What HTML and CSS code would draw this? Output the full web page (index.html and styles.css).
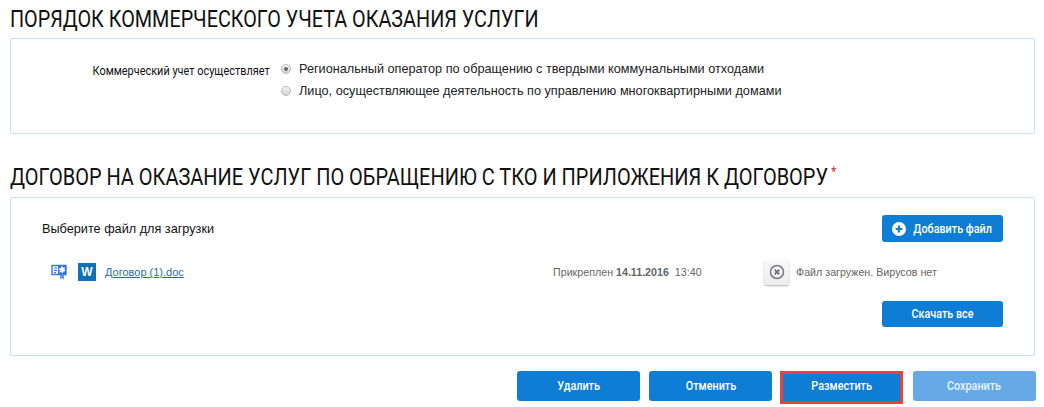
FILE: index.html
```html
<!DOCTYPE html>
<html>
    <head>
        <title>Договор</title>
        <link rel="stylesheet" href="styles.css">
    </head>
    <body>
        <h2 class="title">ПОРЯДОК КОММЕРЧЕСКОГО УЧЕТА ОКАЗАНИЯ УСЛУГИ</h2>
        <div class="panel panel-account">
            <div class="field-label"><span class="narrow narrow-right">Коммерческий учет осуществляет</span></div>
            <div class="radios">
                <div class="radio-row"><span class="radio checked"></span>Региональный оператор по обращению с твердыми коммунальными отходами</div>
                <div class="radio-row"><span class="radio"></span>Лицо, осуществляющее деятельность по управлению многоквартирными домами</div>
            </div>
        </div>

        <h2 class="title title-second">ДОГОВОР НА ОКАЗАНИЕ УСЛУГ ПО ОБРАЩЕНИЮ С ТКО И ПРИЛОЖЕНИЯ К ДОГОВОРУ<span class="req">*</span></h2>
        <div class="panel panel-files">
            <div class="files-head">
                <span class="choose">Выберите файл для загрузки</span>
                <a class="btn btn-add">
                    <svg class="plus" width="14" height="14" viewBox="0 0 14 14"><circle cx="7" cy="7" r="7" fill="#fff"/><path d="M7 3.600v6.800M3.600 7h6.800" stroke="#0e7dd6" stroke-width="2.200"/></svg>
                    <span class="narrow">Добавить файл</span>
                </a>
            </div>
            <div class="file-row">
                <svg class="cert" width="16" height="16" viewBox="0 0 16 16">
                    <path d="M1 1.500h14v9H1z" fill="#fff" stroke="#3b78e0" stroke-width="1.400"/>
                    <path d="M3 4h3M3 6.300h3M3 8.600h2" stroke="#3b78e0" stroke-width="1.200"/>
                    <path d="M7 1.500h8v9H7z" fill="#2f74e2"/>
                    <path d="M11 1.800l1 2 2.200-.4-.8 2.200 1.200 1.500-2.200.3-.8 2.200-1.200-1.700-2.200.5.600-2.200-1.500-1.500 2.300-.4z" fill="#fff"/>
                    <path d="M9 10.500v5l2-1.500 2 1.500v-5z" fill="#5a9bea"/>
                </svg>
                <span class="word">W</span>
                <a class="file-link">Договор (1).doc</a>
                <span class="attached">Прикреплен <b>14.11.2016</b>&nbsp; 13:40</span>
                <span class="remove">
                    <svg width="16" height="16" viewBox="0 0 16 16"><circle cx="8" cy="8" r="6.500" fill="none" stroke="#77787c" stroke-width="1.500"/><path d="M5.800 5.800l4.400 4.400M10.200 5.800l-4.400 4.400" stroke="#77787c" stroke-width="2"/></svg>
                </span>
                <span class="virus">Файл загружен. Вирусов нет</span>
            </div>
            <div class="files-foot">
                <a class="btn btn-all"><span class="narrow">Скачать все</span></a>
            </div>
        </div>

        <div class="actions">
            <a class="btn btn-action"><span class="narrow">Удалить</span></a>
            <a class="btn btn-action"><span class="narrow">Отменить</span></a>
            <a class="btn btn-action btn-marked"><span class="narrow">Разместить</span></a>
            <a class="btn btn-action btn-off"><span class="narrow">Сохранить</span></a>
        </div>
    </body>
</html>
```

FILE: styles.css
```css
* {
    box-sizing: border-box;
}
body {
    margin: 0;
    padding: 0 9px 0 10px;
    font-family: "Liberation Sans", Arial, sans-serif;
    font-size: 12px;
    color: #111;
    background: #fff;
    overflow: hidden;
}
.title {
    margin: 0;
    height: 38px;
    padding-top: 6px;
    font-family: Roboto, sans-serif;
    font-size: 24px;
    line-height: 26px;
    font-weight: normal;
    color: #111;
    white-space: nowrap;
    transform: scaleX(0.825);
    transform-origin: left center;
}
.title-second {
    margin-top: 25px;
    padding-top: 0;
    transform: scaleX(0.832);
}
.req {
    color: #c8313e;
    font-size: 14px;
    vertical-align: 8px;
    margin-left: 4px;
}
/* no condensed face installed, so squeeze the text a bit */
.narrow {
    display: inline-block;
    transform: scaleX(0.9);
    white-space: nowrap;
}
.narrow-right {
    transform: scaleX(0.91);
    transform-origin: right center;
}
.panel {
    border: 1px solid #c6e0f5;
    border-radius: 2px;
}
.panel-account {
    height: 96px;
    display: flex;
    padding-top: 19px;
}
.field-label {
    width: 259px;
    text-align: right;
    padding-top: 5px;
    font-family: Roboto, sans-serif;
    font-size: 12px;
    line-height: 16px;
}
.radios {
    margin-left: 11px;
}
.radio-row {
    display: flex;
    align-items: center;
    height: 22px;
    font-size: 12.700px;
    color: #222;
}
.radio {
    width: 10px;
    height: 10px;
    border-radius: 50%;
    border: 1px solid #bbb;
    background: linear-gradient(#f2f2f2, #d4d4d4);
    margin-right: 8px;
    position: relative;
}
.radio.checked::after {
    content: "";
    position: absolute;
    left: 2px;
    top: 2px;
    width: 4px;
    height: 4px;
    border-radius: 50%;
    background: #666;
}
.panel-files {
    height: 159px;
    padding: 17px 31px 0 31px;
}
.files-head {
    display: flex;
    justify-content: space-between;
    align-items: center;
    font-size: 12.700px;
}
.btn {
    display: flex;
    align-items: center;
    justify-content: center;
    background: #0e7dd6;
    color: #fff;
    border-radius: 3px;
    font-family: Roboto, sans-serif;
    font-size: 12px;
    font-weight: 500;
}
.btn-add {
    width: 121px;
    height: 27px;
    padding-left: 3px;
}
.plus {
    margin-right: 3.500px;
}
.file-row {
    display: flex;
    align-items: center;
    height: 26px;
    margin-top: 17px;
    padding-left: 9px;
    font-size: 10.700px;
    color: #666;
}
.word {
    width: 18px;
    height: 18px;
    margin-left: 11px;
    background: #0e72b8;
    color: #fff;
    font-weight: bold;
    font-size: 12px;
    line-height: 18px;
    text-align: center;
}
.file-link {
    width: 448px;
    margin-left: 9px;
    color: #2c6ba8;
    text-decoration: underline;
    font-size: 11px;
}
.attached {
    width: 211px;
}
.remove {
    display: flex;
    align-items: center;
    justify-content: center;
    width: 25px;
    height: 25px;
    border-radius: 2px;
    background: linear-gradient(#fafafa, #ebebeb);
    box-shadow: 0 1px 2px rgba(0, 0, 0, 0.3);
}
.virus {
    margin-left: 7px;
}
.files-foot {
    display: flex;
    justify-content: flex-end;
    margin-top: 16px;
}
.btn-all {
    width: 121px;
    height: 26px;
}
.actions {
    display: flex;
    align-items: flex-start;
    justify-content: flex-end;
    gap: 9px;
    margin-top: 15px;
    margin-right: -1px;
}
.btn-action {
    width: 123px;
    height: 30px;
}
.btn-marked {
    height: 33px;
    margin: 0 1px 0 -1px;
    padding-bottom: 3px;
    border: 3px solid #e2453f;
    border-radius: 0;
}
.btn-off {
    background: #65aae6;
    color: #e8f2fb;
}
```
